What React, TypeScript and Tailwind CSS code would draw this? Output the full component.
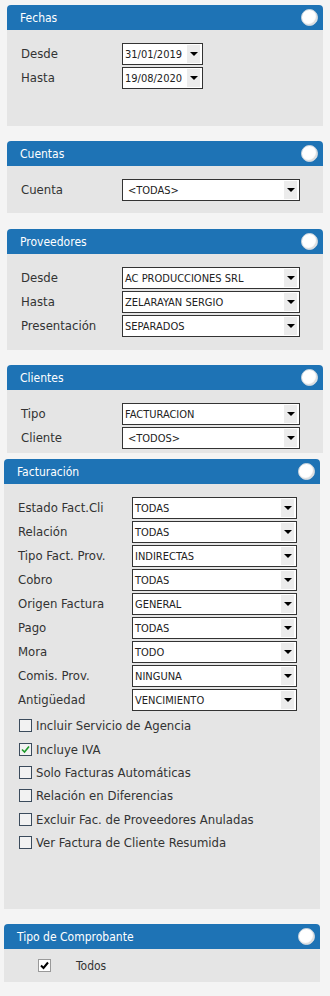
import React from "react";

const FONT = "font-['DejaVu_Sans_Condensed','Noto_Sans',sans-serif]";

function Header({ title }: { title: string }) {
  return (
    <div className="h-[25px] bg-[#1e73b5] rounded-t-[4px] flex items-center justify-between pl-[13px] pr-[5px]">
      <span className="text-white text-[12px] leading-none">{title}</span>
      <div className="w-[17px] h-[17px] rounded-full bg-white border border-[#c9d3dc] shadow-[inset_-1px_-1px_1px_rgba(0,0,0,0.15)]" />
    </div>
  );
}

function Select({ value, w, indent }: { value: string; w: string; indent?: boolean }) {
  return (
    <div className={`${w} h-[22px] border border-[#333] bg-white flex items-center`}>
      <span className={`flex-1 text-[11px] text-[#222] leading-none truncate ${indent ? "pl-[5px]" : "pl-[2px]"}`}>{value}</span>
      <div className="w-[13px] h-[18px] mr-[2px] bg-[#ececec] flex items-center justify-center">
        <div className="w-0 h-0 border-l-[4px] border-r-[4px] border-t-[4px] border-l-transparent border-r-transparent border-t-black" />
      </div>
    </div>
  );
}

function Row({ label, value, labelW, w, indent }: { label: string; value: string; labelW: string; w: string; indent?: boolean }) {
  return (
    <div className="flex h-[22px]">
      <div className={`${labelW} text-[13px] text-[#333] leading-none pt-[4px]`}>{label}</div>
      <Select value={value} w={w} indent={indent} />
    </div>
  );
}

function Check({ label, checked }: { label: string; checked?: boolean }) {
  return (
    <div className="flex items-center h-[23.4px]">
      <div className="w-[13px] h-[13px] border border-[#3b4b5c] bg-[#f2f2f2] flex items-center justify-center">
        {checked && (
          <svg width="9" height="9" viewBox="0 0 9 9">
            <path d="M1 4.5 L3.5 7 L8 1.5" stroke="#1d9a2a" strokeWidth="1.6" fill="none" />
          </svg>
        )}
      </div>
      <span className="ml-[4px] text-[13px] text-[#333] leading-none">{label}</span>
    </div>
  );
}

export default function App() {
  return (
    <div className={`w-[330px] h-[996px] bg-[#f4f4f4] pt-[5px] ${FONT}`}>
      {/* Fechas */}
      <div className="ml-[7px] w-[316px]">
        <Header title="Fechas" />
        <div className="bg-[#e5e5e5] h-[96px] pt-[13px] pl-[14px] flex flex-col gap-[2px]">
          <Row label="Desde" value="31/01/2019" labelW="w-[101px]" w="w-[81px]" />
          <Row label="Hasta" value="19/08/2020" labelW="w-[101px]" w="w-[81px]" />
        </div>
      </div>

      {/* Cuentas */}
      <div className="ml-[7px] w-[316px] mt-[15px]">
        <Header title="Cuentas" />
        <div className="bg-[#e5e5e5] h-[47px] pt-[13px] pl-[14px]">
          <Row label="Cuenta" value="<TODAS>" labelW="w-[101px]" w="w-[178px]" indent />
        </div>
      </div>

      {/* Proveedores */}
      <div className="ml-[7px] w-[316px] mt-[16px]">
        <Header title="Proveedores" />
        <div className="bg-[#e5e5e5] h-[96px] pt-[13px] pl-[14px] flex flex-col gap-[2px]">
          <Row label="Desde" value="AC PRODUCCIONES SRL" labelW="w-[101px]" w="w-[178px]" />
          <Row label="Hasta" value="ZELARAYAN SERGIO" labelW="w-[101px]" w="w-[178px]" />
          <Row label="Presentación" value="SEPARADOS" labelW="w-[101px]" w="w-[178px]" />
        </div>
      </div>

      {/* Clientes */}
      <div className="ml-[7px] w-[316px] mt-[15px]">
        <Header title="Clientes" />
        <div className="bg-[#e5e5e5] h-[63px] pt-[13px] pl-[14px] flex flex-col gap-[2px]">
          <Row label="Tipo" value="FACTURACION" labelW="w-[101px]" w="w-[178px]" />
          <Row label="Cliente" value="<TODOS>" labelW="w-[101px]" w="w-[178px]" indent />
        </div>
      </div>

      {/* Facturación */}
      <div className="ml-[4px] w-[316px] mt-[6px]">
        <Header title="Facturación" />
        <div className="bg-[#e5e5e5] h-[425px] pt-[13px] pl-[14px]">
          <div className="flex flex-col gap-[2px]">
            <Row label="Estado Fact.Cli" value="TODAS" labelW="w-[114px]" w="w-[165px]" />
            <Row label="Relación" value="TODAS" labelW="w-[114px]" w="w-[165px]" />
            <Row label="Tipo Fact. Prov." value="INDIRECTAS" labelW="w-[114px]" w="w-[165px]" />
            <Row label="Cobro" value="TODAS" labelW="w-[114px]" w="w-[165px]" />
            <Row label="Origen Factura" value="GENERAL" labelW="w-[114px]" w="w-[165px]" />
            <Row label="Pago" value="TODAS" labelW="w-[114px]" w="w-[165px]" />
            <Row label="Mora" value="TODO" labelW="w-[114px]" w="w-[165px]" />
            <Row label="Comis. Prov." value="NINGUNA" labelW="w-[114px]" w="w-[165px]" />
            <Row label="Antigüedad" value="VENCIMIENTO" labelW="w-[114px]" w="w-[165px]" />
          </div>
          <div className="mt-[3px] pl-[1px] flex flex-col">
            <Check label="Incluir Servicio de Agencia" />
            <Check label="Incluye IVA" checked />
            <Check label="Solo Facturas Automáticas" />
            <Check label="Relación en Diferencias" />
            <Check label="Excluir Fac. de Proveedores Anuladas" />
            <Check label="Ver Factura de Cliente Resumida" />
          </div>
        </div>
      </div>

      {/* Tipo de Comprobante */}
      <div className="ml-[4px] w-[316px] mt-[15px]">
        <Header title="Tipo de Comprobante" />
        <div className="bg-[#e5e5e5] h-[33px] flex items-center pl-[34px]">
          <div className="w-[13px] h-[13px] border border-[#999] bg-white flex items-center justify-center">
            <svg width="9" height="9" viewBox="0 0 9 9">
              <path d="M1 4.5 L3.5 7 L8 1.5" stroke="#000" strokeWidth="2" fill="none" />
            </svg>
          </div>
          <span className="ml-[25px] text-[12px] text-[#333] leading-none">Todos</span>
        </div>
      </div>
    </div>
  );
}
